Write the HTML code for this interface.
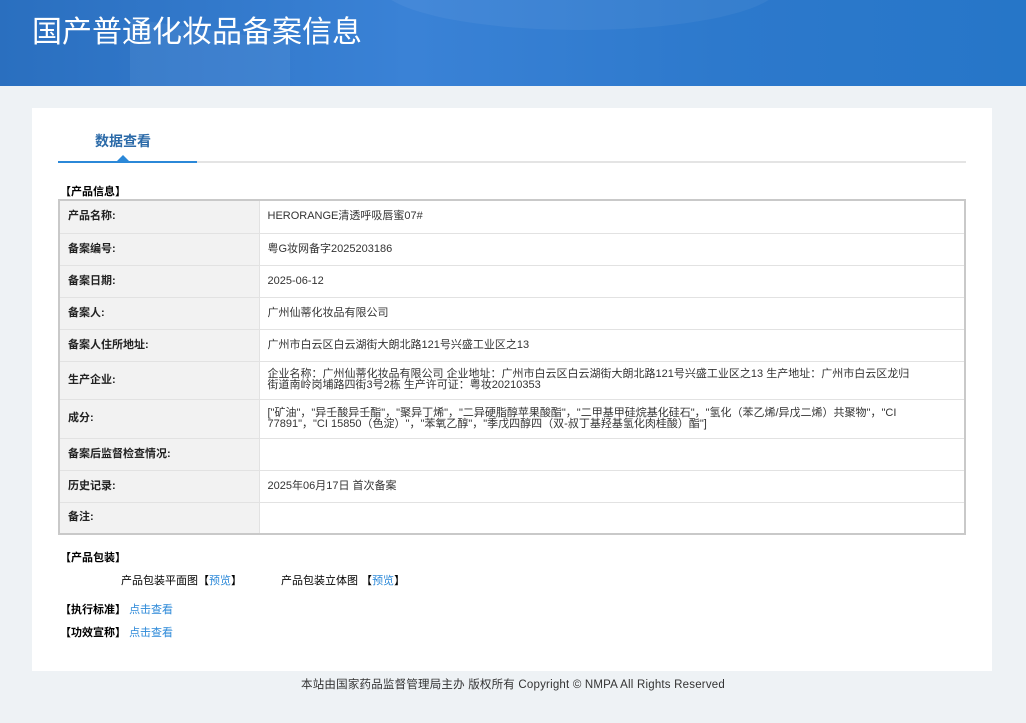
<!DOCTYPE html>
<html><head><meta charset="utf-8"><style>
*{margin:0;padding:0;box-sizing:border-box}
body{width:1026px;height:723px;background:#eef2f5;font-family:"Liberation Sans","Noto Sans CJK SC",sans-serif;font-size:11px;color:#333;position:relative;overflow:hidden}
.hdr{position:absolute;left:0;top:0;width:1026px;height:86px;background:linear-gradient(90deg,#2a6fbf 0%,#3a82d6 40%,#2d79cc 70%,#2676c8 100%);overflow:hidden}
.hdr .s1{position:absolute;left:130px;top:30px;width:160px;height:70px;background:rgba(255,255,255,0.06);transform:skewY(8deg)}
.hdr .s2{position:absolute;left:380px;top:-60px;width:400px;height:90px;border-radius:50%;background:rgba(255,255,255,0.05)}
.hdr h1{position:absolute;left:32px;top:7px;font-size:30px;font-weight:normal;color:#fff;letter-spacing:0}
.card{position:absolute;left:32px;top:108px;width:960px;height:563px;background:#fff}
.tab{position:absolute;left:63px;top:23px;font-size:14px;color:#2b6aa8;font-weight:bold}
.line{position:absolute;left:26px;top:53px;width:908px;height:2px;background:#e4e4e4}
.line .b{position:absolute;left:0;top:0;width:139px;height:2px;background:#2b88d8}
.line .t{position:absolute;left:59px;top:-6px;border:6px solid transparent;border-bottom-color:#2b88d8;border-top:0}
.sec{position:absolute;font-weight:bold;color:#000;font-size:11px}
table{position:absolute;left:26px;top:91px;width:908px;border-collapse:collapse;border:2px solid #c9c9c9}
td{border:1px solid #e2e2e2;padding:0 50px 0 8px;font-size:11px;color:#333;line-height:11px}
td.l{width:200px;background:#f2f2f2;font-weight:bold;color:#222;padding-right:8px}
a{color:#2b88d8;text-decoration:none}
.foot{position:absolute;top:676px;left:0;width:1026px;text-align:center;font-size:11.5px;color:#333;letter-spacing:0.2px}
</style></head><body>
<div class="hdr"><div class="s1"></div><div class="s2"></div><h1>国产普通化妆品备案信息</h1></div>
<div class="card">
<div class="tab">数据查看</div>
<div class="line"><div class="b"></div><div class="t"></div></div>
<div class="sec" style="left:28px;top:75px">【产品信息】</div>
<table>
<tr style="height:33px"><td class="l">产品名称:</td><td>HERORANGE清透呼吸唇蜜07#</td></tr>
<tr style="height:32px"><td class="l">备案编号:</td><td>粤G妆网备字2025203186</td></tr>
<tr style="height:32px"><td class="l">备案日期:</td><td>2025-06-12</td></tr>
<tr style="height:32px"><td class="l">备案人:</td><td>广州仙蒂化妆品有限公司</td></tr>
<tr style="height:32px"><td class="l">备案人住所地址:</td><td>广州市白云区白云湖街大朗北路121号兴盛工业区之13</td></tr>
<tr style="height:38px"><td class="l">生产企业:</td><td>企业名称：广州仙蒂化妆品有限公司 企业地址：广州市白云区白云湖街大朗北路121号兴盛工业区之13 生产地址：广州市白云区龙归街道南岭岗埔路四街3号2栋 生产许可证：粤妆20210353</td></tr>
<tr style="height:39px"><td class="l">成分:</td><td>["矿油"，"异壬酸异壬酯"，"聚异丁烯"，"二异硬脂醇苹果酸酯"，"二甲基甲硅烷基化硅石"，"氢化（苯乙烯/异戊二烯）共聚物"，"CI 77891"，"CI 15850（色淀）"，"苯氧乙醇"，"季戊四醇四（双-叔丁基羟基氢化肉桂酸）酯"]</td></tr>
<tr style="height:32px"><td class="l">备案后监督检查情况:</td><td></td></tr>
<tr style="height:32px"><td class="l">历史记录:</td><td>2025年06月17日 首次备案</td></tr>
<tr style="height:32px"><td class="l">备注:</td><td></td></tr>
</table>
<div class="sec" style="left:28px;top:441px">【产品包装】</div>
<div style="position:absolute;left:89px;top:464px;color:#000">产品包装平面图【<a>预览</a>】</div>
<div style="position:absolute;left:249px;top:464px;color:#000">产品包装立体图 【<a>预览</a>】</div>
<div class="sec" style="left:28px;top:493px">【执行标准】 <a style="font-weight:normal">点击查看</a></div>
<div class="sec" style="left:28px;top:516px">【功效宣称】 <a style="font-weight:normal">点击查看</a></div>
</div>
<div class="foot">本站由国家药品监督管理局主办 版权所有 Copyright © NMPA All Rights Reserved</div>
</body></html>
